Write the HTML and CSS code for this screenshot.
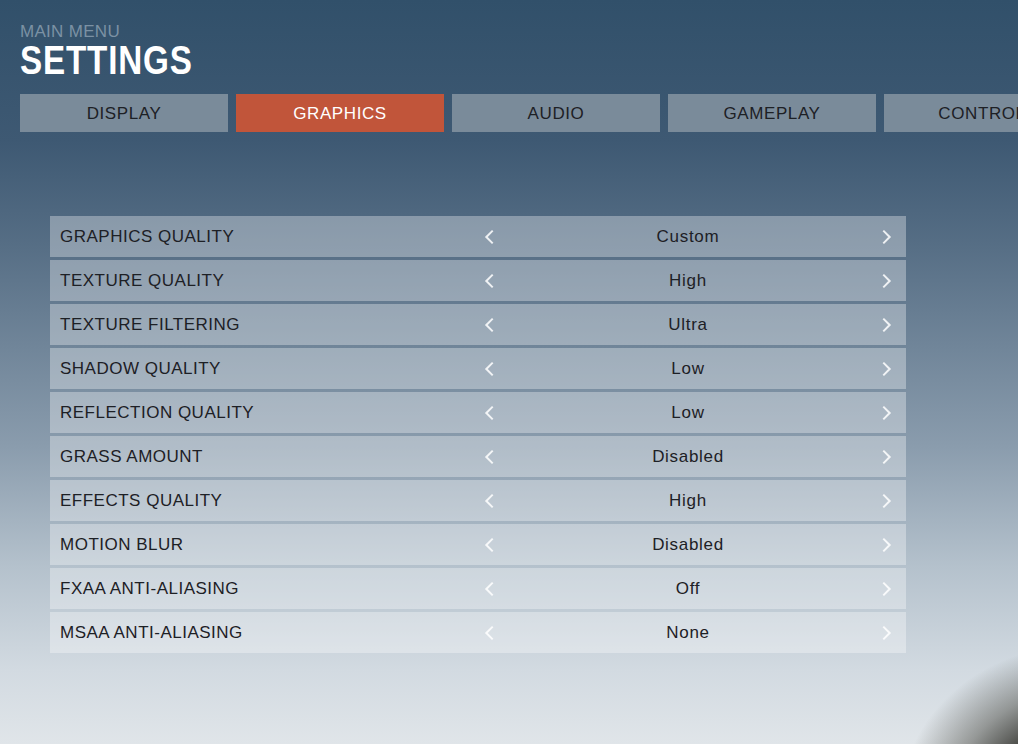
FILE: index.html
```html
<!DOCTYPE html>
<html lang="en">

<head>
  <meta charset="UTF-8">
  <meta name="viewport" content="width=device-width, initial-scale=1.0">
  <title>Settings</title>
  <link rel="stylesheet" href="styles.css">
</head>

<body>
  <div id="screen">
    <div id="header">
      <p class="crumb">MAIN MENU</p>
      <h1 class="title">SETTINGS</h1>
    </div>

    <div id="tabs">
      <div class="tab">DISPLAY</div>
      <div class="tab active">GRAPHICS</div>
      <div class="tab">AUDIO</div>
      <div class="tab">GAMEPLAY</div>
      <div class="tab">CONTROLS</div>
    </div>

    <div id="options">
      <div class="option">
        <span class="label">GRAPHICS QUALITY</span>
        <div class="picker"><span class="arrow left"></span><span class="value">Custom</span><span class="arrow right"></span></div>
      </div>
      <div class="option">
        <span class="label">TEXTURE QUALITY</span>
        <div class="picker"><span class="arrow left"></span><span class="value">High</span><span class="arrow right"></span></div>
      </div>
      <div class="option">
        <span class="label">TEXTURE FILTERING</span>
        <div class="picker"><span class="arrow left"></span><span class="value">Ultra</span><span class="arrow right"></span></div>
      </div>
      <div class="option">
        <span class="label">SHADOW QUALITY</span>
        <div class="picker"><span class="arrow left"></span><span class="value">Low</span><span class="arrow right"></span></div>
      </div>
      <div class="option">
        <span class="label">REFLECTION QUALITY</span>
        <div class="picker"><span class="arrow left"></span><span class="value">Low</span><span class="arrow right"></span></div>
      </div>
      <div class="option">
        <span class="label">GRASS AMOUNT</span>
        <div class="picker"><span class="arrow left"></span><span class="value">Disabled</span><span class="arrow right"></span></div>
      </div>
      <div class="option">
        <span class="label">EFFECTS QUALITY</span>
        <div class="picker"><span class="arrow left"></span><span class="value">High</span><span class="arrow right"></span></div>
      </div>
      <div class="option">
        <span class="label">MOTION BLUR</span>
        <div class="picker"><span class="arrow left"></span><span class="value">Disabled</span><span class="arrow right"></span></div>
      </div>
      <div class="option">
        <span class="label">FXAA ANTI-ALIASING</span>
        <div class="picker"><span class="arrow left"></span><span class="value">Off</span><span class="arrow right"></span></div>
      </div>
      <div class="option">
        <span class="label">MSAA ANTI-ALIASING</span>
        <div class="picker"><span class="arrow left"></span><span class="value">None</span><span class="arrow right"></span></div>
      </div>
    </div>
  </div>
</body>

</html>
```

FILE: styles.css
```css
body {
  margin: 0;
  padding: 0;
  font-family: "Liberation Sans", Arial, sans-serif;
  color: #1d2025;
  overflow: hidden;
}

#screen {
  width: 1018px;
  height: 744px;
  overflow: hidden;
  box-sizing: border-box;
  padding: 22px 0 0 20px;
  background:
    radial-gradient(ellipse 180px 160px at 1080px 805px, rgba(18, 18, 12, 1) 0, rgba(30, 30, 24, 0.92) 42%, rgba(60, 60, 52, 0.45) 72%, rgba(90, 90, 85, 0) 100%),
    linear-gradient(180deg, #31506a 0%, #3e5973 19%, #566e85 33%, #8a9cad 60%, #b4c1cc 76%, #d2dae1 90%, #e0e5e9 100%);
}

/* Page title */
#header {
  height: 72px;
}

.crumb {
  margin: 0;
  font-size: 17px;
  line-height: 19px;
  color: #7b91a4;
  letter-spacing: 0.3px;
}

.title {
  margin: 1px 0 0 0;
  font-size: 40px;
  line-height: 36px;
  font-weight: bold;
  color: #fff;
  letter-spacing: 1px;
  transform: scaleX(0.83);
  transform-origin: left center;
}

/* Category tabs */
#tabs {
  display: flex;
  gap: 8px;
  margin-bottom: 84px;
}

.tab {
  flex: 0 0 208px;
  height: 38px;
  line-height: 39px;
  text-align: center;
  font-size: 17px;
  letter-spacing: 0.6px;
  background-color: #7a8b9a;
  color: #1d2025;
}

.tab.active {
  background-color: #c1553a;
  color: #fff;
}

/* Option rows */
#options {
  display: flex;
  flex-direction: column;
  gap: 3px;
  width: 856px;
  margin-left: 30px;
}

.option {
  display: flex;
  align-items: center;
  height: 41px;
  padding-top: 1px;
  box-sizing: border-box;
  background-color: rgba(255, 255, 255, 0.33);
}

.label {
  flex: 1;
  padding-left: 10px;
  font-size: 17px;
  letter-spacing: 0.5px;
}

.picker {
  display: flex;
  align-items: center;
  width: 436px;
  padding: 0 14px 0 14px;
  box-sizing: border-box;
}

.value {
  flex: 1;
  text-align: center;
  font-size: 17px;
  letter-spacing: 0.7px;
}

/* thin chevrons drawn from two borders of a rotated square */
.arrow {
  width: 10px;
  height: 16px;
  position: relative;
}

.arrow::before {
  content: "";
  position: absolute;
  top: 3px;
  width: 10px;
  height: 10px;
  border-top: 2px solid rgba(255, 255, 255, 0.85);
  border-left: 2px solid rgba(255, 255, 255, 0.85);
  box-sizing: border-box;
}

.arrow.left::before {
  left: 3px;
  transform: rotate(-45deg);
}

.arrow.right::before {
  left: -3px;
  transform: rotate(135deg);
}
```
